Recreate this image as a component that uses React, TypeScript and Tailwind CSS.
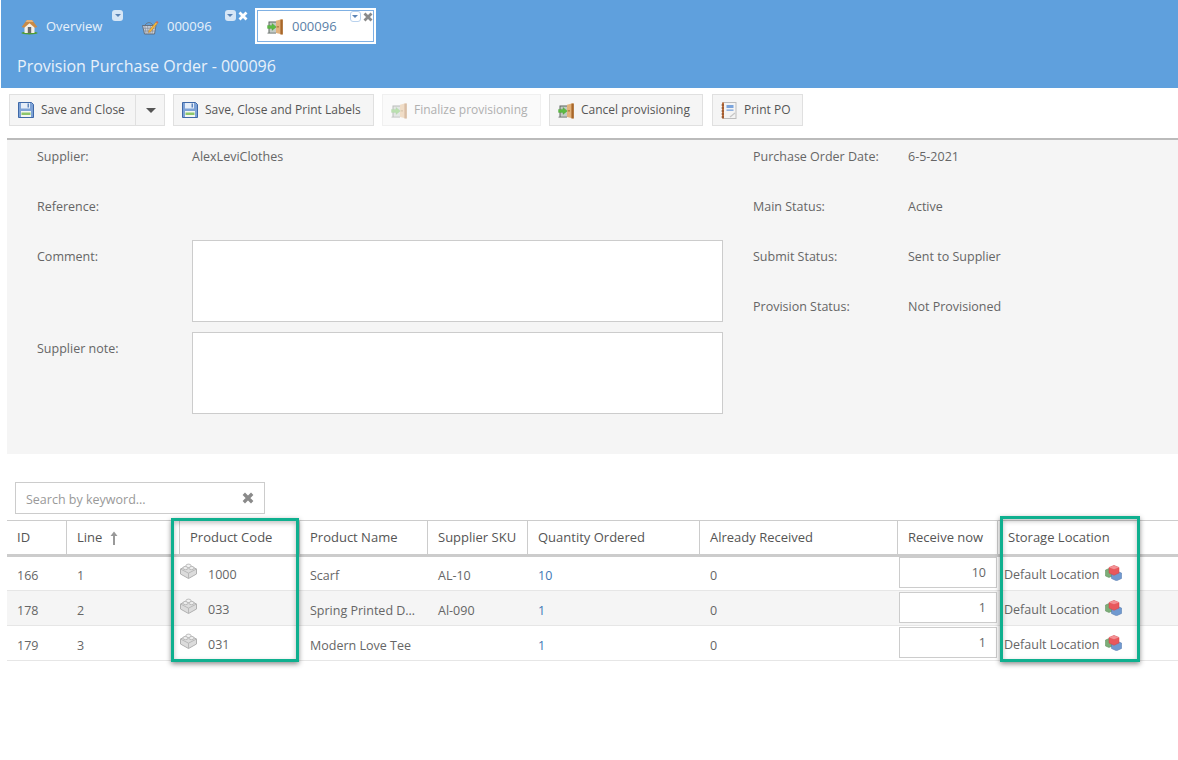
import React from "react";

const font = { fontFamily: '"Open Sans", "Noto Sans", sans-serif' };

function HomeIcon() {
  return (
    <svg width="17" height="17" viewBox="0 0 17 17" className="shrink-0">
      <ellipse cx="8.5" cy="15" rx="8.2" ry="1.5" fill="#4f9a35" />
      <path d="M3.5 8 L8.5 4 L13.5 8 V15 H3.5 Z" fill="#f5f1e8" />
      <rect x="6.8" y="9" width="3.4" height="6" fill="#6a6a6a" />
      <path d="M0.6 9 L6 2 H11 L16.4 9 L13.8 9.8 L8.5 5.2 L3.2 9.8 Z" fill="#c98a45" />
      <path d="M6 2 H11 L12.5 4 H4.5 Z" fill="#e2b27a" />
    </svg>
  );
}

function BasketIcon() {
  return (
    <svg width="17" height="17" viewBox="0 0 17 17" className="shrink-0">
      <path d="M3 7 Q7 2 11 7" fill="none" stroke="#6a7078" strokeWidth="0.8" />
      <path d="M0.5 7.5 H14 L12.5 16 H2.5 Z" fill="#c9d0da" stroke="#5a6068" strokeWidth="0.8" />
      <path d="M2.8 8 L4.2 16 M5.6 8 L6.2 16 M8.4 8 L8 16 M11.2 8 L10 16 M1 10.3 H13.5 M1.5 13 H13" stroke="#7d8590" strokeWidth="0.6" />
      <path d="M7 12.5 L13.8 4.2 L15.4 5.6 L8.6 13.8 L6.4 14.4 Z" fill="#f4b73e" stroke="#a8701c" strokeWidth="0.4" />
      <path d="M13.8 4.2 L14.9 2.9 L16.5 4.3 L15.4 5.6 Z" fill="#d9694d" />
    </svg>
  );
}

function DoorIcon({ faded = false }: { faded?: boolean }) {
  return (
    <svg width="16" height="17" viewBox="0 0 16 17" className={`shrink-0 ${faded ? "opacity-40" : ""}`}>
      <path d="M1.5 3.5 H9 V15.5 H0.5 V14.7 H1.5 Z" fill="#5d645f" />
      <rect x="2.5" y="4.5" width="6.5" height="10.2" fill="#c4cbc6" />
      <path d="M9 2.8 L15.5 1 V16.5 L9 15 Z" fill="#e2b27c" />
      <path d="M13.4 1.6 H15.8 V16.5 H13.4 Z" fill="#a8672a" />
      <rect x="10.5" y="8" width="1" height="1.6" fill="#8a5a20" />
      <path d="M0.5 7.4 H5 V5.4 L9.4 8.9 L5 12.4 V10.4 H0.5 Z" fill="#5cbb42" stroke="#3d9230" strokeWidth="0.3" />
    </svg>
  );
}

function SaveIcon() {
  return (
    <svg width="16" height="16" viewBox="0 0 16 16" className="shrink-0">
      <path d="M0.5 0.5 H13.5 L15.5 2.5 V15.5 H0.5 Z" fill="#7da2d6" stroke="#3f69a8" />
      <rect x="3" y="1" width="9" height="5.5" fill="#e6eef8" />
      <rect x="9.5" y="1.5" width="1.5" height="4" fill="#5f86bd" />
      <rect x="3" y="9" width="10" height="6" fill="#f4f7f2" />
      <rect x="3.5" y="10.5" width="9" height="2.5" fill="#8cc66c" />
    </svg>
  );
}

function NotebookIcon() {
  return (
    <svg width="16" height="17" viewBox="0 0 16 17" className="shrink-0">
      <rect x="2" y="0.5" width="13" height="16" fill="#f4f4f4" stroke="#bdbdbd" />
      <rect x="1" y="0.5" width="2" height="16" fill="#c0703e" />
      <path d="M0.5 3 H3 M0.5 6 H3 M0.5 9 H3 M0.5 12 H3 M0.5 15 H3" stroke="#7d4a2a" />
      <rect x="5.5" y="3" width="7" height="3" fill="#7ba4dc" />
      <rect x="5.5" y="7.5" width="7" height="1.3" fill="#7ba4dc" />
      <path d="M9 15 L14 11" stroke="#c8c8c8" strokeWidth="1.5" />
    </svg>
  );
}

function BrickIcon() {
  return (
    <svg width="17" height="16" viewBox="0 0 17 16" className="shrink-0">
      <path d="M0.5 6 L8.5 2 L16.5 6 V11 L8.5 15.5 L0.5 11 Z" fill="#dcdcdc" stroke="#b0b0b0" />
      <path d="M0.5 6 L8.5 10.2 L16.5 6 M8.5 10.2 V15.5" fill="none" stroke="#b8b8b8" />
      <ellipse cx="5.5" cy="5" rx="2.6" ry="1.7" fill="#ececec" stroke="#b0b0b0" strokeWidth="0.8" />
      <ellipse cx="11.5" cy="5" rx="2.6" ry="1.7" fill="#ececec" stroke="#b0b0b0" strokeWidth="0.8" />
      <ellipse cx="8.5" cy="2.8" rx="2.6" ry="1.7" fill="#f2f2f2" stroke="#b0b0b0" strokeWidth="0.8" />
    </svg>
  );
}

function CubesIcon() {
  return (
    <svg width="17" height="16" viewBox="0 0 17 16" className="shrink-0">
      <path d="M0.5 5 L4 3.5 L7.5 5 V11 L4 12.5 L0.5 11 Z" fill="#7cae78" stroke="#5b8a58" strokeWidth="0.5" />
      <path d="M6.5 8 L11.5 6 L16.5 8 V13.5 L11.5 15.8 L6.5 13.5 Z" fill="#7099d0" stroke="#4a73a8" strokeWidth="0.5" />
      <path d="M4 2.5 L9 0.4 L14 2.5 V8 L9 10.3 L4 8 Z" fill="#e8585c" stroke="#d04448" strokeWidth="0.5" strokeLinejoin="round" />
      <path d="M4 2.5 L9 4.2 L14 2.5 L9 0.4 Z" fill="#f39094" />
    </svg>
  );
}

function Cross({ size = 10, color = "#ffffff" }: { size?: number; color?: string }) {
  return (
    <svg width={size} height={size} viewBox="0 0 10 10" className="shrink-0">
      <path d="M1.5 1.5 L8.5 8.5 M8.5 1.5 L1.5 8.5" stroke={color} strokeWidth="2.8" />
    </svg>
  );
}

function TabMenu({ light = false }: { light?: boolean }) {
  return (
    <span
      className={`flex h-[11px] w-[11px] items-center justify-center rounded-[3px] ${
        light ? "border border-[#b9d2ee] bg-white" : "bg-[#d6e6f6]"
      }`}
    >
      <span className="h-0 w-0 border-x-[3px] border-t-[3px] border-x-transparent border-t-[#5b84b5]" />
    </span>
  );
}

function ToolButton({
  icon,
  label,
  width,
  faded = false,
}: {
  icon: React.ReactNode;
  label: string;
  width: string;
  faded?: boolean;
}) {
  return (
    <div
      className={`flex h-8 items-center gap-[7px] border pl-[8px] text-[12px] ${width} ${
        faded
          ? "border-[#f0f0f0] bg-[#fafafa] text-[#b0b0b0]"
          : "border-[#e0e0e0] bg-[#f5f5f5] text-[#555]"
      }`}
    >
      {icon}
      <span className="whitespace-nowrap">{label}</span>
    </div>
  );
}

function InfoRow({ label, value }: { label: string; value: string }) {
  return (
    <div className="flex h-[50px] pt-[8px] leading-[18px]">
      <div className="w-[155px] text-[#666]">{label}</div>
      <div className="text-[#666]">{value}</div>
    </div>
  );
}

const columns = [
  { label: "ID", width: "w-[59px]" },
  { label: "Line", width: "w-[113px]" },
  { label: "Product Code", width: "w-[120px]" },
  { label: "Product Name", width: "w-[128px]" },
  { label: "Supplier SKU", width: "w-[100px]" },
  { label: "Quantity Ordered", width: "w-[172px]" },
  { label: "Already Received", width: "w-[198px]" },
  { label: "Receive now", width: "w-[100px]" },
  { label: "Storage Location", width: "" },
];

const rows = [
  { id: "166", line: "1", code: "1000", name: "Scarf", sku: "AL-10", qty: "10", rec: "0", now: "10" },
  { id: "178", line: "2", code: "033", name: "Spring Printed Dress", sku: "Al-090", qty: "1", rec: "0", now: "1" },
  { id: "179", line: "3", code: "031", name: "Modern Love Tee", sku: "", qty: "1", rec: "0", now: "1" },
];

export default function App() {
  return (
    <div style={font} className="h-[760px] w-[1178px] overflow-hidden bg-white text-[12.5px] text-[#666]">
      {/* Blue header with tabs */}
      <header className="ml-px h-[88px] bg-[#5fa0dd]">
        <div className="flex h-[52px] pt-[8px] text-[13px]">
          <div className="flex h-9 w-[124px] items-center pl-[20px] pt-px text-[#e8f1fa]">
            <HomeIcon />
            <span className="ml-2">Overview</span>
            <span className="ml-[10px] -mt-[22px]"><TabMenu /></span>
          </div>
          <div className="ml-[17px] flex h-9 w-[115px] items-center pt-px text-[#e8f1fa]">
            <BasketIcon />
            <span className="ml-2">000096</span>
            <span className="ml-[13px] -mt-[22px]"><TabMenu /></span>
            <span className="ml-[2px] -mt-[22px]"><Cross /></span>
          </div>
          <div className="ml-[-2px] h-9 w-[121px] border-2 border-white bg-white">
            <div className="flex h-full items-center border border-[#7fb0e3] pl-[9px] pt-px text-[#5b7fa8]">
              <DoorIcon />
              <span className="ml-[9px]">000096</span>
              <span className="ml-[13px] -mt-[20px]"><TabMenu light /></span>
              <span className="ml-[2px] -mt-[20px]"><Cross color="#8a8a8a" /></span>
            </div>
          </div>
        </div>
        <h1 className="pl-[16px] text-[16px] leading-[28px] text-[#e8f1fa]">Provision Purchase Order - 000096</h1>
      </header>

      {/* Toolbar */}
      <div className="flex h-[50px] pl-[9px] pt-[6px]">
        <ToolButton icon={<SaveIcon />} label="Save and Close" width="w-[127px]" />
        <div className="flex h-8 w-[29px] items-center justify-center border border-l-0 border-[#e0e0e0] bg-[#f5f5f5] pl-px">
          <span className="h-0 w-0 border-x-[5px] border-t-[5px] border-x-transparent border-t-[#555]" />
        </div>
        <div className="ml-[8px]"><ToolButton icon={<SaveIcon />} label="Save, Close and Print Labels" width="w-[201px]" /></div>
        <div className="ml-[8px]"><ToolButton icon={<DoorIcon faded />} label="Finalize provisioning" width="w-[159px]" faded /></div>
        <div className="ml-[8px]"><ToolButton icon={<DoorIcon />} label="Cancel provisioning" width="w-[154px]" /></div>
        <div className="ml-[9px]"><ToolButton icon={<NotebookIcon />} label="Print PO" width="w-[91px]" /></div>
      </div>

      {/* Order details */}
      <section className="ml-[7px] flex h-[316px] border-t-2 border-[#bbbbbb] bg-[#f5f5f5] pl-[30px]">
        <div className="w-[716px]">
          <InfoRow label="Supplier:" value="AlexLeviClothes" />
          <InfoRow label="Reference:" value="" />
          <div className="flex h-[92px]">
            <div className="w-[155px] pt-[8px] leading-[18px]">Comment:</div>
            <div className="h-[82px] w-[531px] border border-[#cccccc] bg-white" />
          </div>
          <div className="flex h-[92px]">
            <div className="w-[155px] pt-[8px] leading-[18px]">Supplier note:</div>
            <div className="h-[82px] w-[531px] border border-[#cccccc] bg-white" />
          </div>
        </div>
        <div className="flex-1">
          <InfoRow label="Purchase Order Date:" value="6-5-2021" />
          <InfoRow label="Main Status:" value="Active" />
          <InfoRow label="Submit Status:" value="Sent to Supplier" />
          <InfoRow label="Provision Status:" value="Not Provisioned" />
        </div>
      </section>

      {/* Search */}
      <div className="ml-[15px] mt-[28px] flex h-8 w-[250px] items-center justify-between border border-[#cccccc] px-[10px] text-[#999]">
        <span className="mt-[4px]">Search by keyword...</span>
        <Cross size={12} color="#8a8a8a" />
      </div>

      {/* Lines table */}
      <div className="relative ml-[7px] mt-[6px]">
        <table className="w-[1171px] table-fixed border-collapse">
          <thead>
            <tr className="h-[35px] border-y border-b-[3px] border-y-[#cccccc] text-left">
              {columns.map((c, i) => (
                <th
                  key={c.label}
                  className={`${c.width} ${i === 0 ? "pl-[10px]" : "border-l border-[#cccccc] pl-[10.5px]"} text-[13px] font-normal text-[#555]`}
                >
                  <span className="flex items-center gap-[8px]">
                    {c.label}
                    {c.label === "Line" && (
                      <svg width="8" height="14" viewBox="0 0 8 14">
                        <path d="M4 0.5 L7.5 5 H5 V14 H3 V5 H0.5 Z" fill="#999" />
                      </svg>
                    )}
                  </span>
                </th>
              ))}
            </tr>
          </thead>
          <tbody>
            {rows.map((r, i) => {
              // the first row sits one pixel higher against its borders
              const text = i === 0 ? "pt-[10px]" : "pt-[11px]";
              return (
                <tr key={r.id} className={`h-[35px] border-b border-[#e6e6e6] leading-[18px] ${i === 1 ? "bg-[#f5f5f5]" : ""}`}>
                  <td className={`pl-[10px] align-top ${text}`}>{r.id}</td>
                  <td className={`pl-[11px] align-top ${text}`}>{r.line}</td>
                  <td className={`pl-px align-top ${i === 0 ? "pt-[6px]" : "pt-[7px]"}`}>
                    <div className="flex items-start">
                      <BrickIcon />
                      <span className="ml-[11px] mt-[3px]">{r.code}</span>
                    </div>
                  </td>
                  <td className={`pl-[11px] align-top ${text}`}><div className="truncate pr-[10px]">{r.name}</div></td>
                  <td className={`pl-[11px] align-top ${text}`}>{r.sku}</td>
                  <td className={`pl-[11px] align-top text-[#3f78b5] ${text}`}>{r.qty}</td>
                  <td className={`pl-[11px] align-top ${text}`}>{r.rec}</td>
                  <td className={`pl-[2px] align-top ${i === 0 ? "pt-0" : "pt-px"}`}>
                    <div className="flex h-[31px] w-[98px] items-center justify-end border border-[#cccccc] bg-white pr-[10px]">{r.now}</div>
                  </td>
                  <td className={`pl-[7px] align-top ${i === 0 ? "pt-[8px]" : "pt-[9px]"}`}>
                    <div className="flex items-start">
                      <span className="mt-px">Default Location</span>
                      <span className="ml-[5px]"><CubesIcon /></span>
                    </div>
                  </td>
                </tr>
              );
            })}
          </tbody>
        </table>

        {/* Highlight annotations drawn over the table */}
        <div className="pointer-events-none absolute left-[164px] top-[-2px] h-[144px] w-[128px] border-[3px] border-[#0fb08f] shadow-[0_2px_5px_rgba(0,0,0,0.45),inset_0_2px_5px_rgba(0,0,0,0.25)]" />
        <div className="pointer-events-none absolute left-[993px] top-[-4px] h-[146px] w-[140px] border-[3px] border-[#0fb08f] shadow-[0_2px_5px_rgba(0,0,0,0.45),inset_0_2px_5px_rgba(0,0,0,0.25)]" />
      </div>
    </div>
  );
}
